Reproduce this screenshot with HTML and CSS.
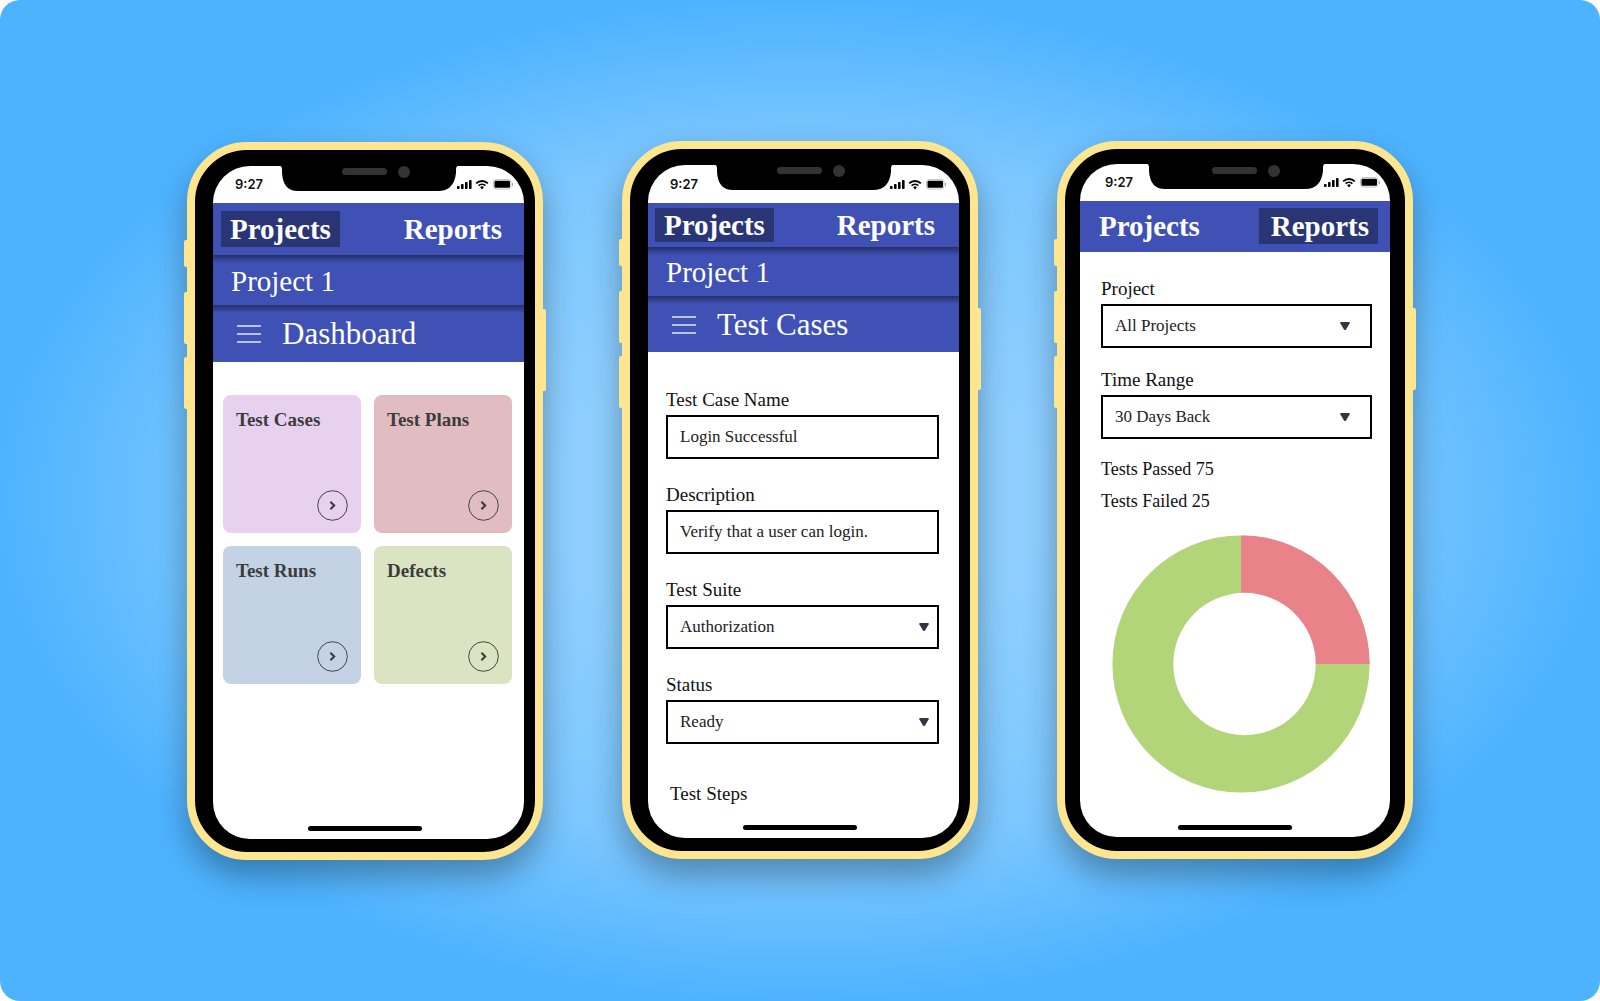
FILE: index.html
```html
<!DOCTYPE html>
<html lang="en">
<head>
<meta charset="utf-8">
<meta name="viewport" content="width=device-width, initial-scale=1">
<title>Test management app</title>
<link rel="stylesheet" href="styles.css">
</head>
<body>
<svg width="0" height="0" class="defs" aria-hidden="true">
  <symbol id="status" viewBox="0 0 57 12">
    <rect x="1" y="8" width="2.600" height="3" rx=".8"/>
    <rect x="5" y="6" width="2.600" height="5" rx=".8"/>
    <rect x="9" y="4" width="2.600" height="7" rx=".8"/>
    <rect x="13" y="2" width="2.600" height="9" rx=".8"/>
    <path d="M20.2 5.400a8.400 8.400 0 0 1 11.600 0" fill="none" stroke="#000" stroke-width="2"/>
    <path d="M22.6 7.700a5 5 0 0 1 6.800 0" fill="none" stroke="#000" stroke-width="1.700"/>
    <path d="M24.1 9.300a2.700 2.700 0 0 1 3.800 0L26 11.400Z"/>
    <rect x="37.500" y="1.500" width="17.500" height="9.500" rx="2.500" fill="none" stroke="#c4c4c4"/>
    <rect x="38.500" y="2.800" width="15.500" height="7" rx="1.200"/>
    <path d="M56 4.700a1.600 1.600 0 0 1 0 3.200Z" fill="#aaa"/>
  </symbol>
  <symbol id="notch" viewBox="0 0 178 26">
    <path d="M0 0H178Q176 0 176 4V7Q174 25 158 25H18Q3 25 2 7V4Q2 0 0 0Z"/>
  </symbol>
  <symbol id="chevron" viewBox="0 0 31 31">
    <circle cx="15.5" cy="15.5" r="14.8" fill="none" stroke="#444" stroke-width="1"/>
    <path d="M13.4 11.8 17.2 15.5 13.4 19.2" fill="none" stroke="#3a3a3a" stroke-width="2"/>
  </symbol>
  <symbol id="menu" viewBox="0 0 24 18">
    <path d="M0 1H24M0 9H24M0 17H24" stroke="#e6e8f5" stroke-width="1.6"/>
  </symbol>
  <symbol id="caret" viewBox="0 0 10 8">
    <path d="M1 0H9Q10 .2 9.700 1.200L6 7.400Q5 8.400 4 7.400L.3 1.200Q0 .2 1 0Z" fill="#333642"/>
  </symbol>
</svg>

<main class="stage">
  <section class="phone phone-dashboard" aria-label="Dashboard">
    <i class="key key-mute"></i><i class="key key-up"></i><i class="key key-down"></i><i class="key key-power"></i>
    <i class="speaker"></i><i class="camera"></i>
    <div class="screen">
      <svg class="notch" aria-hidden="true"><use href="#notch"/></svg>
      <div class="status"><span>9:27</span><svg class="status-icons" aria-hidden="true"><use href="#status"/></svg></div>
      <nav class="bar tabs"><a href="#" class="tab active">Projects</a><a href="#" class="tab">Reports</a></nav>
      <div class="bar crumb">Project 1</div>
      <div class="bar title"><button class="menu" aria-label="Menu"><svg aria-hidden="true"><use href="#menu"/></svg></button><h1>Dashboard</h1></div>
      <div class="cards">
        <a href="#" class="card cases"><span>Test Cases</span><svg aria-hidden="true"><use href="#chevron"/></svg></a>
        <a href="#" class="card plans"><span>Test Plans</span><svg aria-hidden="true"><use href="#chevron"/></svg></a>
        <a href="#" class="card runs"><span>Test Runs</span><svg aria-hidden="true"><use href="#chevron"/></svg></a>
        <a href="#" class="card defects"><span>Defects</span><svg aria-hidden="true"><use href="#chevron"/></svg></a>
      </div>
    </div>
    <i class="home"></i>
  </section>

  <section class="phone phone-case" aria-label="Test Cases">
    <i class="key key-mute"></i><i class="key key-up"></i><i class="key key-down"></i><i class="key key-power"></i>
    <i class="speaker"></i><i class="camera"></i>
    <div class="screen">
      <svg class="notch" aria-hidden="true"><use href="#notch"/></svg>
      <div class="status"><span>9:27</span><svg class="status-icons" aria-hidden="true"><use href="#status"/></svg></div>
      <nav class="bar tabs"><a href="#" class="tab active">Projects</a><a href="#" class="tab">Reports</a></nav>
      <div class="bar crumb">Project 1</div>
      <div class="bar title"><button class="menu" aria-label="Menu"><svg aria-hidden="true"><use href="#menu"/></svg></button><h1>Test Cases</h1></div>
      <form class="form">
        <div class="field"><label for="name">Test Case Name</label><input id="name" type="text" value="Login Successful"></div>
        <div class="field"><label for="desc">Description</label><input id="desc" type="text" value="Verify that a user can login."></div>
        <div class="field"><label for="suite">Test Suite</label><div class="select"><select id="suite"><option>Authorization</option></select><svg aria-hidden="true"><use href="#caret"/></svg></div></div>
        <div class="field"><label for="state">Status</label><div class="select"><select id="state"><option>Ready</option></select><svg aria-hidden="true"><use href="#caret"/></svg></div></div>
        <h2 class="steps">Test Steps</h2>
      </form>
    </div>
    <i class="home"></i>
  </section>

  <section class="phone phone-report" aria-label="Reports">
    <i class="key key-mute"></i><i class="key key-up"></i><i class="key key-down"></i><i class="key key-power"></i>
    <i class="speaker"></i><i class="camera"></i>
    <div class="screen">
      <svg class="notch" aria-hidden="true"><use href="#notch"/></svg>
      <div class="status"><span>9:27</span><svg class="status-icons" aria-hidden="true"><use href="#status"/></svg></div>
      <nav class="bar tabs"><a href="#" class="tab">Projects</a><a href="#" class="tab active">Reports</a></nav>
      <form class="form">
        <div class="field"><label for="project">Project</label><div class="select"><select id="project"><option>All Projects</option></select><svg aria-hidden="true"><use href="#caret"/></svg></div></div>
        <div class="field"><label for="range">Time Range</label><div class="select"><select id="range"><option>30 Days Back</option></select><svg aria-hidden="true"><use href="#caret"/></svg></div></div>
        <div class="stats"><p>Tests Passed 75</p><p>Tests Failed 25</p></div>
        <svg class="donut" viewBox="0 0 258 258" role="img" aria-label="75 passed, 25 failed">
          <circle cx="129" cy="129" r="128.6" fill="#b3d57a"/>
          <path d="M129 129V.4A128.6 128.6 0 0 1 257.6 129Z" fill="#ea8289"/>
          <circle cx="132.5" cy="129" r="71.2" fill="#fff"/>
        </svg>
      </form>
    </div>
    <i class="home"></i>
  </section>
</main>
</body>
</html>
```
FILE: styles.css
```css
* { box-sizing: border-box; }

body {
  margin: 0;
  background: #fff;
  font-family: "Liberation Serif", "Times New Roman", serif;
  color: #111;
}

h1, h2, p { margin: 0; font-weight: 400; }
a { color: inherit; text-decoration: none; }
.defs { position: absolute; }

.stage {
  display: flex;
  flex-wrap: wrap;
  justify-content: center;
  align-items: center;
  gap: 79px;
  min-height: 100vh;
  border-radius: 20px;
  background: radial-gradient(ellipse closest-side, #93d0ff 0%, #8ecfff 30%, #7cc7ff 70%, #4eb3ff 100%);
}

/* Device frame */
.phone {
  position: relative;
  display: flex;
  flex: 0 1 356px;
  min-height: 718px;
  padding: 16px 11px 13px 18px;
  border: 8px solid #fde68f;
  border-radius: 60px;
  background: #000;
  box-shadow: 0 16px 32px rgba(0, 0, 0, .32);
}
.phone-case, .phone-report { margin-bottom: 2px; }
.phone-report { padding: 15px 15px 14px; }

.key {
  position: absolute;
  left: -11px;
  width: 3px;
  border-radius: 2px 0 0 2px;
  background: #fde68f;
}
.key-mute { top: 90px; height: 27px; }
.key-up { top: 142px; height: 52px; }
.key-down { top: 207px; height: 52px; }
.key-power { top: 159px; right: -11px; left: auto; height: 82px; border-radius: 0 2px 2px 0; }

.speaker, .camera { position: absolute; z-index: 3; background: #333; }
.speaker { top: 18px; left: 147px; width: 45px; height: 7px; border-radius: 4px; }
.camera { top: 16px; left: 203px; width: 12px; height: 12px; border-radius: 50%; }
.home {
  position: absolute;
  bottom: 21px;
  left: 50%;
  width: 114px;
  height: 5px;
  margin-left: -57px;
  border-radius: 3px;
  background: #000;
}

.screen {
  position: relative;
  flex: 1;
  min-width: 0;
  overflow: hidden;
  border-radius: 37px;
  background: #fff;
}
.notch { position: absolute; z-index: 2; top: 0; left: 67px; width: 178px; height: 26px; }

.status {
  display: flex;
  justify-content: space-between;
  align-items: center;
  height: 37px;
  padding: 0 11px 0 22px;
  font: 600 13px/16px Inter, sans-serif;
}
.phone-case .status { height: 38px; padding-right: 13px; }
.phone-report .status { padding: 0 10px 0 25px; }
.status-icons { width: 57px; height: 12px; }

/* Header rows */
.bar {
  position: relative;
  display: flex;
  align-items: center;
  background: #3f51b5;
  color: #fff;
  font-size: 29px;
  line-height: 32px;
}
.tabs {
  z-index: 1;
  justify-content: space-between;
  height: 52px;
  padding: 0 13px 0 8px;
  font-weight: 700;
}
.tab { padding: 2px 9px; }
.active { background: #2a3575; }
.crumb { height: 50px; padding: 2px 18px 0; }
.title { gap: 21px; height: 57px; padding: 2px 24px 0; }
.title h1 { font-size: 31px; }
.crumb, .title { background: linear-gradient(#252f69, #3f51b5 8px); }
.menu { width: 24px; height: 18px; padding: 0; border: 0; background: none; }
.menu svg { display: block; width: 24px; height: 18px; }

.phone-case .tabs { height: 44px; padding: 1px 15px 0 7px; }
.phone-case .tab { padding: 1px 9px; }
.phone-case .crumb { height: 49px; }
.phone-case .title { height: 56px; }
.phone-report .tabs { height: 51px; padding: 0 12px 0 10px; }
.phone-report .active { padding-left: 12px; }

/* Dashboard cards */
.cards {
  display: grid;
  grid-template-columns: 1fr 1fr;
  gap: 13px;
  padding: 33px 12px 0 10px;
}
.card {
  display: flex;
  flex-direction: column;
  justify-content: space-between;
  aspect-ratio: 1;
  padding: 14px 13px 12px;
  border-radius: 8px;
  color: #3c3c3c;
  font-size: 19px;
  font-weight: 700;
  line-height: 22px;
}
.card svg { align-self: flex-end; width: 31px; height: 31px; }
.cases { background: #e8d1ee; }
.plans { background: #e1bcc0; }
.runs { background: #c3d3e5; }
.defects { background: #dae4c3; }

/* Forms */
.form { display: flex; flex-direction: column; gap: 24px; padding: 36px 20px 0 18px; }
.field { display: flex; flex-direction: column; gap: 3px; }
.field label, .steps { font-size: 19px; line-height: 24px; }
.steps { margin: 14px 0 0 4px; }
.field input, .field select {
  width: 100%;
  height: 44px;
  padding: 0 12px;
  border: 2px solid #000;
  border-radius: 0;
  background: #fff;
  color: #222;
  font: inherit;
  font-size: 17px;
  appearance: none;
}
.select { display: grid; align-items: center; }
.select > * { grid-area: 1 / 1; }
.select svg { justify-self: end; width: 10px; height: 8px; margin-right: 10px; pointer-events: none; }

.phone-report .form { gap: 20px; padding: 25px 18px 0 21px; }
.phone-report .select svg { margin-right: 22px; }
.stats { display: grid; gap: 12px; font-size: 18px; line-height: 20px; }
.donut { width: 258px; margin: 4px 0 0 11px; }
```
